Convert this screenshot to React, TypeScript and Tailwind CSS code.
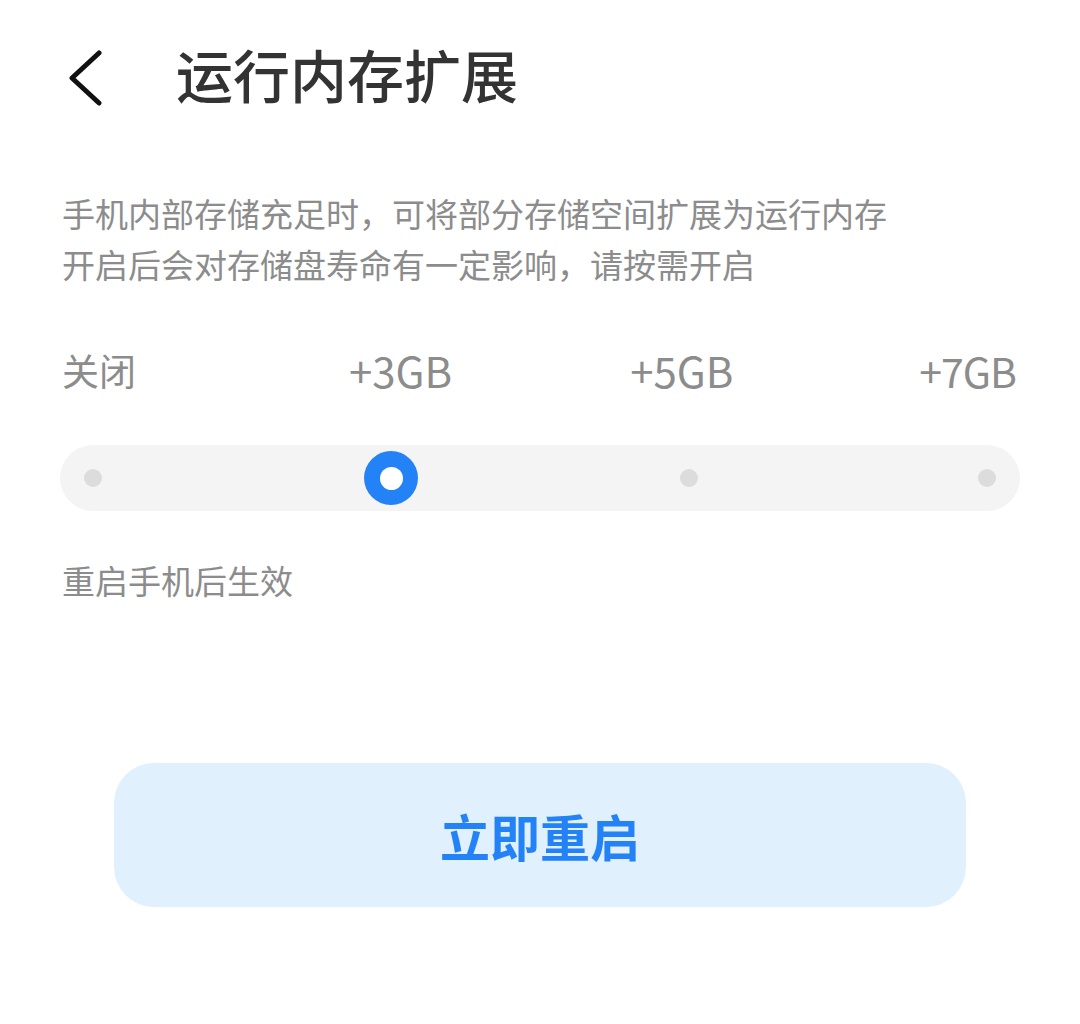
import React from 'react';

const levels = ['关闭', '+3GB', '+5GB', '+7GB'];

function BackIcon() {
  return (
    <svg width="40" height="56" viewBox="0 0 40 56" fill="none" stroke="#111" strokeWidth={5} strokeLinecap="round" strokeLinejoin="round">
      <path d="M33 3 L6 28 L33 53" />
    </svg>
  );
}

export default function App() {
  const selected = 1;

  return (
    <div
      className="w-[1080px] h-[1024px] bg-white relative overflow-hidden"
      style={{ fontFamily: '"Noto Sans CJK SC", "Noto Sans", sans-serif' }}
    >
      {/* Header */}
      <div className="flex items-center h-[146px] pl-[66px]">
        <button className="w-[40px] h-[56px] flex items-center mt-[10px]" aria-label="返回">
          <BackIcon />
        </button>
        <h1 className="ml-[70px] text-[57px] font-medium text-[#333333] leading-none">运行内存扩展</h1>
      </div>

      {/* Description */}
      <div className="px-[62px] mt-[42px] text-[33px] leading-[51px] text-[#8c8c8c]">
        <p>手机内部存储充足时，可将部分存储空间扩展为运行内存</p>
        <p>开启后会对存储盘寿命有一定影响，请按需开启</p>
      </div>

      {/* Level labels */}
      <div className="flex items-end h-[44px] pl-[62px] mt-[57px] leading-none text-[#8c8c8c] whitespace-nowrap">
        <span className="text-[37px] shrink-0 mb-[2px]">{levels[0]}</span>
        <span className="text-[42px] shrink-0 ml-[213px]">{levels[1]}</span>
        <span className="text-[42px] shrink-0 ml-[178px]">{levels[2]}</span>
        <span className="text-[41px] shrink-0 ml-[186px] tracking-[-1px]">{levels[3]}</span>
      </div>

      {/* Slider */}
      <div className="mx-[60px] mt-[54px] h-[66px] rounded-full bg-[#f4f4f4] flex items-center justify-between px-[6px]">
        {levels.map((l, i) => (
          <div key={l} className="w-[54px] h-[54px] flex items-center justify-center">
            {i === selected ? (
              <div className="w-[54px] h-[54px] rounded-full bg-[#2383f6] flex items-center justify-center">
                <div className="w-[23px] h-[23px] rounded-full bg-white" />
              </div>
            ) : (
              <div className="w-[18px] h-[18px] rounded-full bg-[#dcdcdc]" />
            )}
          </div>
        ))}
      </div>

      <p className="px-[62px] mt-[44px] text-[33px] leading-[51px] text-[#8c8c8c]">重启手机后生效</p>

      {/* Restart button */}
      <div className="flex justify-center mt-[157px]">
        <button className="w-[852px] h-[144px] rounded-[40px] bg-[#e0f0fd] text-[50px] font-bold text-[#2383f6] leading-none">
          立即重启
        </button>
      </div>
    </div>
  );
}
